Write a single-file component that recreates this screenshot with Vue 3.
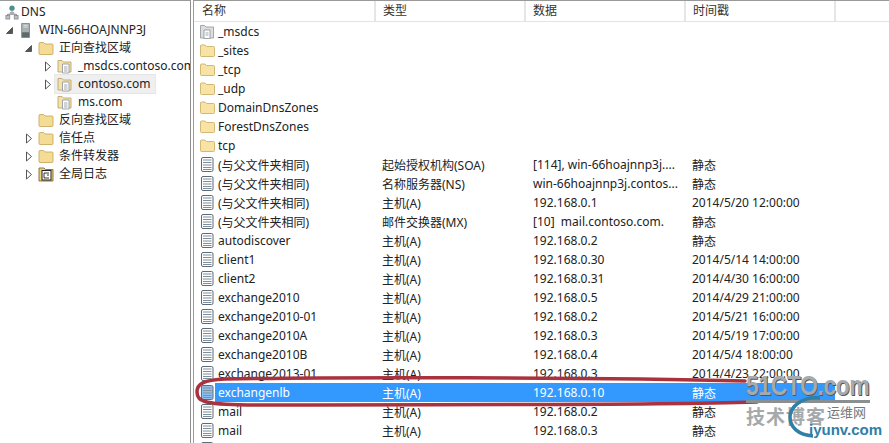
<script setup>
const tree = [
  { label: 'DNS', indent: 0, icon: 'dns', arrow: '' },
  { label: 'WIN-66HOAJNNP3J', indent: 1, icon: 'server', arrow: 'open' },
  { label: '正向查找区域', indent: 2, icon: 'folder', arrow: 'open' },
  { label: '_msdcs.contoso.com', indent: 3, icon: 'zone', arrow: 'closed' },
  { label: 'contoso.com', indent: 3, icon: 'zone', arrow: 'closed', selected: true },
  { label: 'ms.com', indent: 3, icon: 'zone', arrow: '' },
  { label: '反向查找区域', indent: 2, icon: 'folder', arrow: '' },
  { label: '信任点', indent: 2, icon: 'folder', arrow: 'closed' },
  { label: '条件转发器', indent: 2, icon: 'folder', arrow: 'closed' },
  { label: '全局日志', indent: 2, icon: 'log', arrow: 'closed' },
]
const headers = [
  { label: '名称', w: 181 },
  { label: '类型', w: 150 },
  { label: '数据', w: 160 },
  { label: '时间戳', w: 150 },
]
const rows = [
  ['_msdcs', '', '', '', 'zone'],
  ['_sites', '', '', '', 'folder'],
  ['_tcp', '', '', '', 'folder'],
  ['_udp', '', '', '', 'folder'],
  ['DomainDnsZones', '', '', '', 'folder'],
  ['ForestDnsZones', '', '', '', 'folder'],
  ['tcp', '', '', '', 'folder'],
  ['(与父文件夹相同)', '起始授权机构(SOA)', '[114], win-66hoajnnp3j....', '静态', 'rec'],
  ['(与父文件夹相同)', '名称服务器(NS)', 'win-66hoajnnp3j.contos...', '静态', 'rec'],
  ['(与父文件夹相同)', '主机(A)', '192.168.0.1', '2014/5/20 12:00:00', 'rec'],
  ['(与父文件夹相同)', '邮件交换器(MX)', '[10]  mail.contoso.com.', '静态', 'rec'],
  ['autodiscover', '主机(A)', '192.168.0.2', '静态', 'rec'],
  ['client1', '主机(A)', '192.168.0.30', '2014/5/14 14:00:00', 'rec'],
  ['client2', '主机(A)', '192.168.0.31', '2014/4/30 16:00:00', 'rec'],
  ['exchange2010', '主机(A)', '192.168.0.5', '2014/4/29 21:00:00', 'rec'],
  ['exchange2010-01', '主机(A)', '192.168.0.2', '2014/5/21 16:00:00', 'rec'],
  ['exchange2010A', '主机(A)', '192.168.0.3', '2014/5/19 17:00:00', 'rec'],
  ['exchange2010B', '主机(A)', '192.168.0.4', '2014/5/4 18:00:00', 'rec'],
  ['exchange2013-01', '主机(A)', '192.168.0.3', '2014/4/23 22:00:00', 'rec'],
  ['exchangenlb', '主机(A)', '192.168.0.10', '静态', 'rec', true],
  ['mail', '主机(A)', '192.168.0.2', '静态', 'rec'],
  ['mail', '主机(A)', '192.168.0.3', '静态', 'rec'],
  ['', '', '', '', 'rec'],
]
</script>

<template>
  <div class="window">
    <aside class="tree">
      <div
        v-for="n in tree"
        :key="n.label"
        class="node"
        :class="'lvl' + n.indent"
      >
        <span class="arrow">
          <svg v-if="n.arrow === 'open'" width="9" height="9" viewBox="0 0 9 9"><path d="M7.5 1.5V7.5H1.5Z" fill="#555" stroke="#444" stroke-width=".8"/></svg>
          <svg v-else-if="n.arrow === 'closed'" width="8" height="11" viewBox="0 0 8 11"><path d="M1.5 1L6.5 5.5L1.5 10Z" fill="#fff" stroke="#555" stroke-width="1"/></svg>
        </span>
        <span class="item" :class="{ sel: n.selected }">
          <span class="ico">
            <svg v-if="n.icon === 'dns'" width="14" height="17" viewBox="0 0 16 17">
              <circle cx="8" cy="3.5" r="3" fill="#4d8f8c"/>
              <path d="M8 6.5V10M3 13V10.5H13V13" fill="none" stroke="#777"/>
              <rect x="5.5" y="8" width="5" height="3" fill="#aab"/>
              <rect x="1" y="12" width="4.5" height="4" fill="#b9bdc4" stroke="#777" stroke-width=".7"/>
              <rect x="10.5" y="12" width="4.5" height="4" fill="#b9bdc4" stroke="#777" stroke-width=".7"/>
            </svg>
            <svg v-else-if="n.icon === 'server'" width="14" height="17" viewBox="0 0 16 18">
              <path d="M3 1H12V17H3Z" fill="#a9b0b2" stroke="#7f8688"/>
              <path d="M5 3H10M5 5H10" stroke="#e4e7e8"/>
              <path d="M3.500 11H11.500V16.500H3.500Z" fill="#5f696c"/>
            </svg>
            <svg v-else-if="n.icon === 'folder'" width="16" height="14" viewBox="0 0 16 14">
              <path d="M1 2.500Q1 1.500 2 1.500H5.500L7 3H14Q15 3 15 4V12.500Q15 13.500 14 13.500H2Q1 13.500 1 12.500Z" fill="#f5dc94" stroke="#c9ab62" stroke-width=".9"/>
            </svg>
            <svg v-else-if="n.icon === 'zone'" width="16" height="16" viewBox="0 0 16 16">
              <path d="M1 2.500H5L6.500 4H14V14H1Z" fill="#f3e2ae" stroke="#bda66c" stroke-width=".9"/>
              <path d="M5.500 6H12V15H5.500Z" fill="#fff" stroke="#8c929a" stroke-width=".8"/>
              <path d="M7 9H10.500M7 11H10.500M7 13H10.500" stroke="#8c929a" stroke-width=".8"/>
            </svg>
            <svg v-else width="16" height="16" viewBox="0 0 16 16">
              <path d="M1 2H6L7.500 3.500H15V15H1Z" fill="#efd27e" stroke="#7d6a3a" stroke-width=".9"/>
              <rect x="4" y="4.500" width="9" height="9.500" fill="#fff" stroke="#222"/>
              <path d="M6 7H11M9 9H11M6 12H11M6 7V12" stroke="#222" stroke-width=".9"/>
            </svg>
          </span>
          <span class="node-label">{{ n.label }}</span>
        </span>
      </div>
    </aside>

    <main class="list">
      <header class="head">
        <div v-for="h in headers" :key="h.label" class="hcell" :style="{ width: h.w + 'px' }">{{ h.label }}</div>
      </header>
      <div class="body">
        <div v-for="(r, i) in rows" :key="i" class="row" :class="{ hot: r[5] }">
          <span class="rico">
            <svg v-if="r[4] === 'folder'" width="15" height="13" viewBox="0 0 15 13">
              <path d="M.5 2Q.5 1 1.500 1H5L6.500 2.500H13.500Q14.500 2.500 14.500 3.500V11.500Q14.500 12.500 13.500 12.500H1.500Q.5 12.500 .5 11.500Z" fill="#f8e3a4" stroke="#cdb26a" stroke-width=".9"/>
            </svg>
            <svg v-else-if="r[4] === 'zone'" width="15" height="15" viewBox="0 0 15 15">
              <path d="M.5 1.500H4.500L6 3H13.500V14H.5Z" fill="#dcdee0" stroke="#9a9ea3" stroke-width=".9"/>
              <path d="M4 6H10V14.500H4Z" fill="#fff" stroke="#8c929a" stroke-width=".8"/>
              <path d="M5.500 9H8.500M5.500 11H8.500" stroke="#8c929a" stroke-width=".8"/>
            </svg>
            <svg v-else width="14" height="15" viewBox="0 0 14 15">
              <rect x="1.500" y=".5" width="11.500" height="14" rx="1.500" :fill="r[5] ? '#8fc0f2' : '#fff'" stroke="#5c6a78"/>
              <path d="M3 3H11.500M3 5.500H11.500M3 8H11.500M3 10.500H11.500M3 12.500H11.500" stroke="#7f8e9c"/>
            </svg>
          </span>
          <span class="c0">{{ r[0] }}</span>
          <span class="c1">{{ r[1] }}</span>
          <span class="c2">{{ r[2] }}</span>
          <span class="c3">{{ r[3] }}</span>
        </div>
      </div>
    </main>

    <svg class="ring" width="889" height="443" viewBox="0 0 889 443">
      <path d="M745 381C600 377 320 377 225 379C203 380 197 384 197 392C197 402 205 405 260 405C420 404 620 406 757 402"
        fill="none" stroke="#a9323f" stroke-width="3.5" stroke-linecap="round"/>
    </svg>

    <div class="mark">
      <div class="mark-top">51CTO.com</div>
      <div class="mark-rule"></div>
      <div class="mark-cn">技术博客</div>
      <div class="mark-yw">运维网</div>
      <svg class="mark-arc" width="50" height="50" viewBox="0 0 50 50">
        <path d="M36 3C18 1 6 12 6 22C6 32 14 40 29 41" fill="none" stroke="#2f7fa8" stroke-width="3.5"/>
      </svg>
      <div class="mark-iy">iyunv.com</div>
    </div>
  </div>
</template>

<style scoped>
.window {
  position: relative;
  width: 889px;
  height: 443px;
  overflow: hidden;
  background: #fff;
  display: flex;
  font-family: "Noto Sans", "Noto Sans CJK SC", sans-serif;
  font-size: 12px;
  color: #222;
}
.tree {
  width: 191px;
  height: 443px;
  flex: none;
  box-sizing: border-box;
  border-top: 1px solid #999;
  border-right: 1px solid #8f8f8f;
  padding-top: 1px;
  overflow: hidden;
}
.node {
  height: 18px;
  display: flex;
  align-items: center;
  white-space: nowrap;
}
.lvl0 { margin-top: 1px; margin-bottom: 0; }
.lvl1 { padding-left: 4px; }
.lvl2 { padding-left: 23px; }
.lvl3 { padding-left: 42px; }
.arrow {
  width: 11px;
  flex: none;
  display: flex;
  align-items: center;
  justify-content: center;
}
.lvl0 .arrow { width: 1px; }
.item {
  display: flex;
  align-items: center;
  height: 18px;
  margin-left: 2px;
  padding: 0 4px 0 2px;
}
.ico {
  width: 16px;
  height: 18px;
  flex: none;
  display: flex;
  align-items: center;
}
.node-label {
  margin-left: 3px;
  line-height: 18px;
}
.lvl0 .node-label { margin-left: 0; }
.lvl1 .node-label { margin-left: 4px; }
.lvl2 .node-label { margin-left: 5px; }
.lvl3 .node-label { margin-left: 5px; }
.sel {
  background: #efefef;
  outline: 1px solid #e6e6e6;
}
.list {
  flex: 1;
  min-width: 0;
  margin-left: 2px;
  box-sizing: border-box;
  border-top: 1px solid #999;
  border-left: 1px solid #9a9a9a;
}
.head {
  height: 21px;
  display: flex;
  box-sizing: border-box;
  border-bottom: 1px solid #e3e3e3;
  padding-left: 1px;
}
.hcell {
  flex: none;
  box-sizing: border-box;
  padding-left: 7px;
  line-height: 19px;
  color: #333;
  border-right: 2px solid #e6e6e6;
}
.row {
  height: 19px;
  display: flex;
  align-items: center;
  white-space: pre;
}
.rico {
  width: 15px;
  margin-left: 6px;
  margin-right: 3px;
  flex: none;
  display: flex;
  align-items: center;
}
.c0 { width: 164px; flex: none; }
.c1 { width: 151px; flex: none; }
.c2 { width: 159px; flex: none; }
.c3 { flex: none; }
.row.hot {
  color: #fff;
  background: linear-gradient(#3399ff, #3399ff) no-repeat 21px 0 / 620px 100%;
}
.ring {
  position: absolute;
  left: 0;
  top: 0;
  pointer-events: none;
}
.mark {
  position: absolute;
  left: 740px;
  top: 370px;
  width: 149px;
  height: 73px;
  pointer-events: none;
}
.mark-top {
  position: absolute;
  left: 6px;
  top: 1px;
  font: bold 27px/30px "Liberation Sans", sans-serif;
  letter-spacing: -0.5px;
  color: #a6aaac;
  text-shadow: 1px 1px 0 #555;
  white-space: nowrap;
  transform: scaleX(.85);
  transform-origin: left top;
}
.mark-rule {
  position: absolute;
  left: 6px;
  top: 30px;
  width: 124px;
  height: 3px;
  background: #8a8f91;
}
.mark-cn {
  position: absolute;
  left: 6px;
  top: 34px;
  font: bold 19px/24px "Noto Sans CJK SC", sans-serif;
  letter-spacing: 1px;
  color: #a5a9ab;
  white-space: nowrap;
}
.mark-yw {
  position: absolute;
  left: 87px;
  top: 33px;
  font: 13px/18px "Noto Sans CJK SC", sans-serif;
  color: #777;
  white-space: nowrap;
}
.mark-iy {
  position: absolute;
  left: 69px;
  top: 50px;
  font: bold 15px/20px "Liberation Sans", sans-serif;
  color: #2e7ea6;
  white-space: nowrap;
}
.mark-arc {
  position: absolute;
  left: 44px;
  top: 25px;
}
</style>
